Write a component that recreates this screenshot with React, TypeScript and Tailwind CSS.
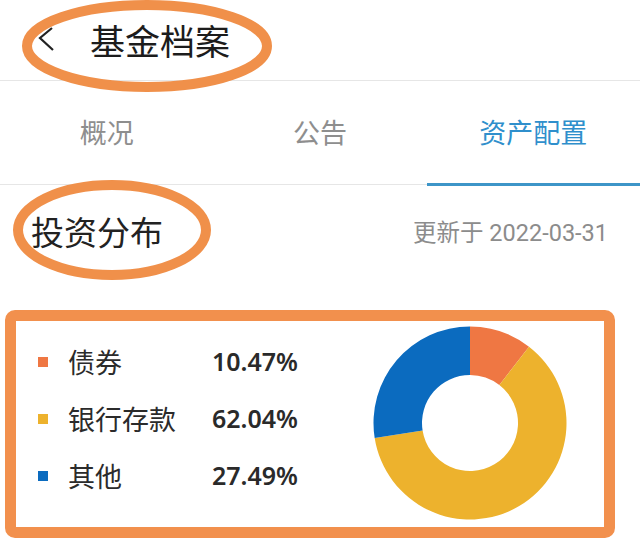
const CJK = "font-['Noto_Sans_CJK_SC','Noto_Sans',sans-serif]";

const slices = [
  { name: "债券", value: 10.47, color: "#ef7743" },
  { name: "银行存款", value: 62.04, color: "#edb22d" },
  { name: "其他", value: 27.49, color: "#0b6bbf" },
];

function arcPath(cx: number, cy: number, R: number, r: number, a0: number, a1: number) {
  const pt = (rad: number, a: number) => {
    const t = ((a - 90) * Math.PI) / 180;
    return `${(cx + rad * Math.cos(t)).toFixed(2)} ${(cy + rad * Math.sin(t)).toFixed(2)}`;
  };
  const large = a1 - a0 > 180 ? 1 : 0;
  return `M ${pt(R, a0)} A ${R} ${R} 0 ${large} 1 ${pt(R, a1)} L ${pt(r, a1)} A ${r} ${r} 0 ${large} 0 ${pt(r, a0)} Z`;
}

function Donut() {
  const total = slices.reduce((s, x) => s + x.value, 0);
  let acc = 0;
  return (
    <svg width="196" height="196" viewBox="0 0 196 196">
      {slices.map((s) => {
        const a0 = (acc / total) * 360;
        acc += s.value;
        const a1 = (acc / total) * 360;
        return <path key={s.name} d={arcPath(98, 98, 96.5, 48, a0, a1)} fill={s.color} />;
      })}
    </svg>
  );
}

export default function App() {
  return (
    <div className={`relative h-[539px] w-[640px] overflow-hidden bg-white ${CJK}`}>
      <header className="flex h-[81px] items-center border-b border-[#e6e6e6]">
        <svg className="ml-[38px] shrink-0" width="18" height="30" viewBox="0 0 18 30">
          <path d="M14 3 L2 13 L15 25" fill="none" stroke="#222" strokeWidth="2.2" />
        </svg>
        <h1 className="ml-[34px] pb-[2px] text-[35px] leading-none text-[#1c1c1c]">基金档案</h1>
      </header>

      <nav className="grid h-[104px] grid-cols-3 border-b border-[#e6e6e6]">
        <div className="flex items-center justify-center text-[27px] text-[#8e8e8e]">概况</div>
        <div className="flex items-center justify-center text-[27px] text-[#8e8e8e]">公告</div>
        <div className="relative flex items-center justify-center text-[27px] text-[#2f8fcc]">
          资产配置
          <span className="absolute bottom-[-2px] left-0 right-0 h-[3px] bg-[#3d95c8]" />
        </div>
      </nav>

      <section className="flex h-[125px] items-start justify-between pl-[31px] pr-[32px] pt-[30px]">
        <h2 className="text-[33px] leading-none text-[#222]">投资分布</h2>
        <span className="pt-[7px] font-['Roboto','Noto_Sans_CJK_SC',sans-serif] text-[23.5px] leading-none text-[#8c8c8c]">
          更新于 2022-03-31
        </span>
      </section>

      <div className="ml-[5px] mr-[25px] flex h-[228px] items-center rounded-[10px] border-[11px] border-[#f2904d]">
        <ul className="flex flex-col pb-[11px] pl-[22px]">
          {slices.map((s) => (
            <li key={s.name} className="flex h-[57px] items-center">
              <span className="h-[10px] w-[10px]" style={{ backgroundColor: s.color }} />
              <span className="ml-[20px] w-[144px] text-[27px] leading-none text-[#2b2b2b]">{s.name}</span>
              <span className="font-['Noto_Sans','Open_Sans',sans-serif] text-[25px] font-semibold leading-none text-[#2a2a2a]">
                {s.value.toFixed(2)}%
              </span>
            </li>
          ))}
        </ul>
        <div className="ml-auto mr-[36px] pb-[2px]">
          <Donut />
        </div>
      </div>

      <svg className="pointer-events-none absolute left-0 top-0" width="640" height="539" viewBox="0 0 640 539">
        <ellipse cx="147" cy="46" rx="120" ry="41" fill="none" stroke="#f0904a" strokeWidth="10" />
        <ellipse cx="112" cy="230" rx="94" ry="45" fill="none" stroke="#f0904a" strokeWidth="10" />
      </svg>
    </div>
  );
}
